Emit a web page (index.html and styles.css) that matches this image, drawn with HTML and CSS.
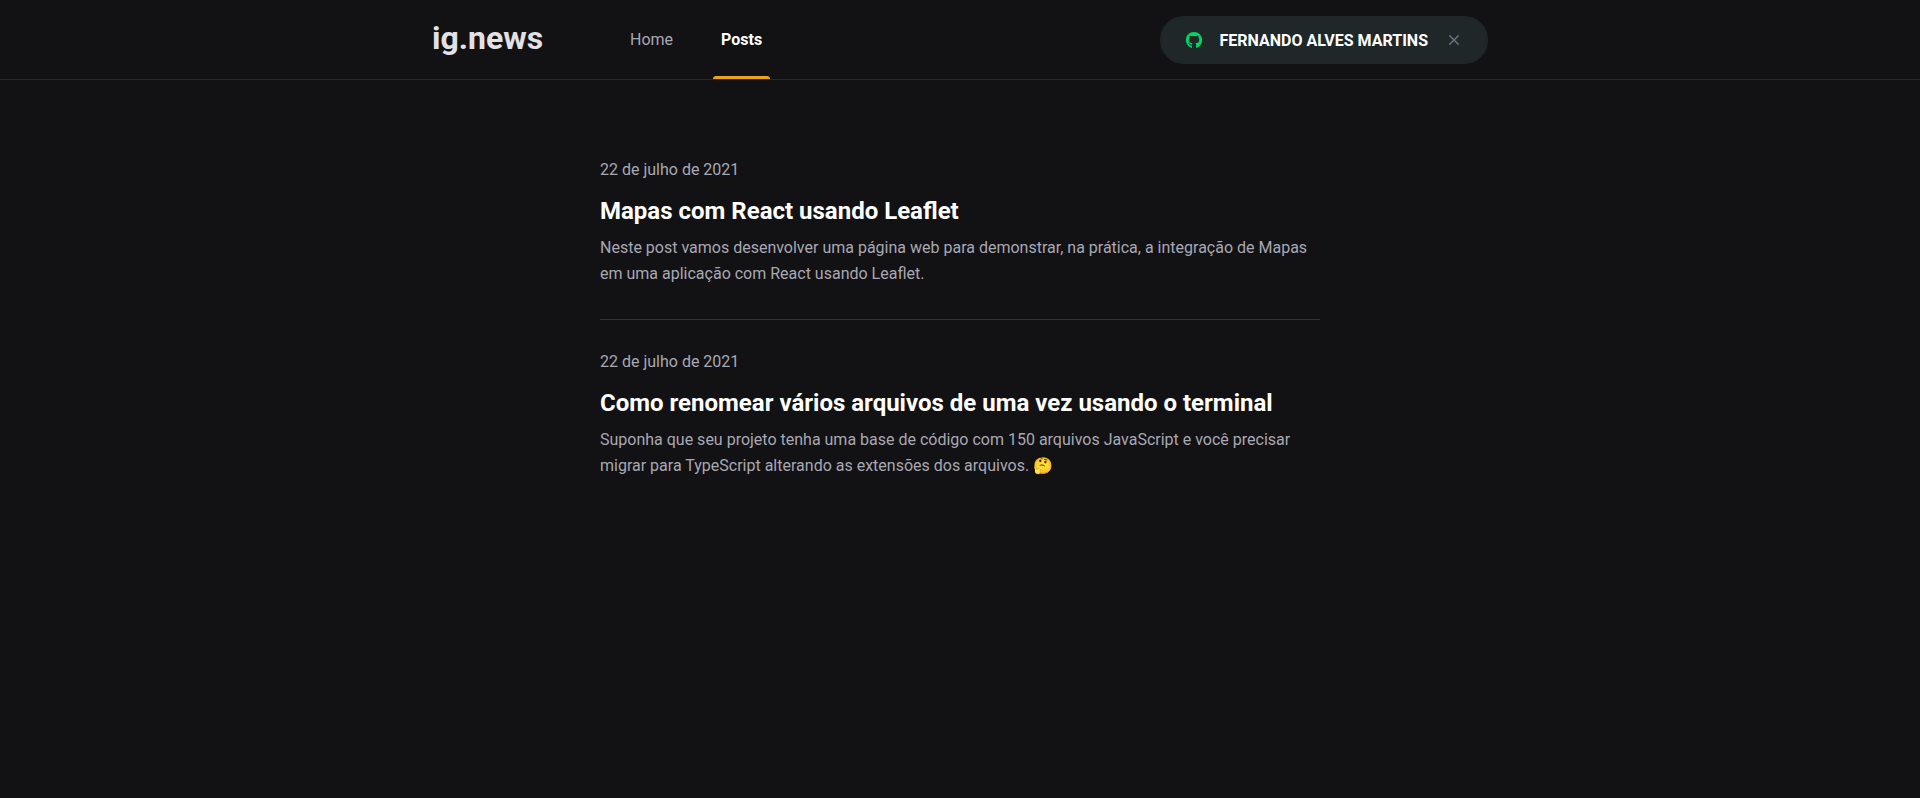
FILE: index.html
```html
<!DOCTYPE html>
<html lang="pt-BR">
<head>
<meta charset="utf-8">
<meta name="viewport" content="width=device-width, initial-scale=1">
<title>Posts | ig.news</title>
<link rel="stylesheet" href="styles.css">
</head>
<body>
<header class="header">
  <div class="header-content">
    <a class="logo" href="#">ig.news</a>
    <nav class="nav">
      <a href="#">Home</a>
      <a class="active" href="#">Posts</a>
    </nav>
    <button class="user" type="button">
      <svg class="github" viewBox="0 0 496 512" aria-hidden="true"><g transform="translate(40 46) scale(.84)"><path fill="currentColor" d="M165.9 397.4c0 2-2.3 3.6-5.2 3.6-3.3.3-5.6-1.3-5.6-3.6 0-2 2.3-3.6 5.2-3.6 3-.3 5.6 1.3 5.6 3.6zm-31.1-4.5c-.7 2 1.3 4.3 4.3 4.9 2.6 1 5.6 0 6.2-2s-1.3-4.3-4.3-5.2c-2.6-.7-5.5.3-6.2 2.3zm44.2-1.7c-2.9.7-4.9 2.6-4.6 4.9.3 2 2.9 3.3 5.9 2.6 2.9-.7 4.9-2.6 4.6-4.6-.3-1.9-3-3.2-5.9-2.9zM244.8 8C106.1 8 0 113.3 0 252c0 110.9 69.8 205.8 169.5 239.2 12.8 2.3 17.3-5.6 17.3-12.1 0-6.2-.3-40.4-.3-61.4 0 0-70 15-84.7-29.8 0 0-11.4-29.1-27.8-36.6 0 0-22.9-15.7 1.6-15.4 0 0 24.9 2 38.6 25.8 21.9 38.6 58.6 27.5 72.9 20.9 2.3-16 8.8-27.1 16-33.7-55.9-6.2-112.3-14.3-112.3-110.5 0-27.5 7.6-41.3 23.6-58.9-2.6-6.5-11.1-33.3 2.6-67.9 20.9-6.5 69 27 69 27 20-5.6 41.5-8.5 62.8-8.5s42.8 2.9 62.8 8.5c0 0 48.1-33.6 69-27 13.7 34.7 5.2 61.4 2.6 67.9 16 17.7 25.8 31.5 25.8 58.9 0 96.5-58.9 104.2-114.8 110.5 9.2 7.9 17 22.9 17 46.4 0 33.7-.3 75.4-.3 83.6 0 6.5 4.6 14.4 17.3 12.1C428.2 457.8 496 362.9 496 252 496 113.3 383.5 8 244.8 8z"/></g></svg>
      FERNANDO ALVES MARTINS
      <svg class="close" viewBox="-2 -2 28 28" aria-hidden="true"><path fill="none" stroke="currentColor" stroke-width="2" stroke-linecap="round" stroke-linejoin="round" d="M18 6L6 18M6 6l12 12"/></svg>
    </button>
  </div>
</header>
<main class="container">
  <div class="posts">
    <a class="post" href="#">
      <time datetime="2021-07-22">22 de julho de 2021</time>
      <strong>Mapas com React usando Leaflet</strong>
      <p>Neste post vamos desenvolver uma página web para demonstrar, na prática, a integração de Mapas em uma aplicação com React usando Leaflet.</p>
    </a>
    <a class="post" href="#">
      <time datetime="2021-07-22">22 de julho de 2021</time>
      <strong>Como renomear vários arquivos de uma vez usando o terminal</strong>
      <p>Suponha que seu projeto tenha uma base de código com 150 arquivos JavaScript e você precisar migrar para TypeScript alterando as extensões dos arquivos. 🤔</p>
    </a>
  </div>
</main>
</body>
</html>
```

FILE: styles.css
```css
* {
  margin: 0;
  padding: 0;
  box-sizing: border-box;
}

body {
  background: #121214;
  color: #fff;
  font: 400 16px Roboto, sans-serif;
}

a {
  color: inherit;
  text-decoration: none;
}

.header {
  height: 80px;
  border-bottom: 1px solid #29292e;
}

.header-content {
  max-width: 1120px;
  height: 80px;
  margin: 0 auto;
  padding: 0 32px;
  display: flex;
  align-items: center;
}

.logo {
  width: 110px;
  padding-bottom: 4px;
  color: #e1e1e6;
  font-size: 32px;
  font-weight: 700;
  line-height: 36px;
}

.nav {
  margin-left: 80px;
  display: flex;
  gap: 32px;
}

.nav a {
  position: relative;
  padding: 0 8px;
  line-height: 80px;
  color: #a8a8b3;
}

.nav .active {
  color: #fff;
  font-weight: 700;
}

.nav .active::after {
  content: "";
  position: absolute;
  left: 0;
  bottom: 1px;
  width: 100%;
  height: 3px;
  border-radius: 3px 3px 0 0;
  background: #eba417;
}

.user {
  height: 48px;
  margin-left: auto;
  padding: 0 24px;
  display: flex;
  align-items: center;
  gap: 16px;
  border: 0;
  border-radius: 24px;
  background: #1f2729;
  color: #fff;
  font: inherit;
  font-weight: 700;
}

.user svg {
  width: 20px;
  height: 20px;
}

.github {
  color: #04d361;
}

.close {
  color: #737380;
}

.container {
  max-width: 1120px;
  margin: 0 auto;
  padding: 0 32px;
}

.posts {
  max-width: 720px;
  margin: 80px auto 0;
}

.post {
  display: block;
}

.post + .post {
  margin-top: 32px;
  padding-top: 32px;
  border-top: 1px solid #323238;
}

.post time {
  display: block;
  color: #a8a8b3;
  line-height: 19px;
}

.post strong {
  display: block;
  margin-top: 16px;
  font-size: 24px;
  line-height: 32px;
}

.post p {
  margin-top: 8px;
  color: #a8a8b3;
  line-height: 26px;
}
```
